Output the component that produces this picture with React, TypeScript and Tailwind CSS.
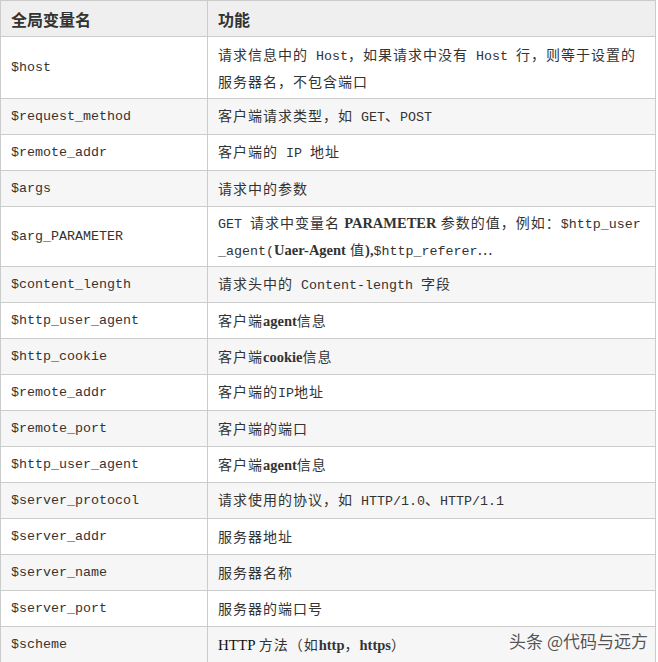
import type { ReactNode } from 'react'

type Row = { name: string; desc: ReactNode; tall?: boolean }

// latin runs in the reference are half-width (8px), cjk runs 15px
function M({ children }: { children: ReactNode }) {
  return <span className="font-['Liberation_Mono',monospace] text-[13.33px] tracking-normal">{children}</span>
}

function B({ children }: { children: ReactNode }) {
  return <span className="font-['Liberation_Serif',serif] font-bold text-[14.5px] tracking-normal">{children}</span>
}

function R({ children }: { children: ReactNode }) {
  return <span className="font-['Liberation_Serif',serif] text-[15px] text-[#111] tracking-normal">{children}</span>
}

const rows: Row[] = [
  {
    name: '$host',
    tall: true,
    desc: (
      <>
        请求信息中的<M> Host</M>，如果请求中没有<M> Host </M>行，则等于设置的
        <br />
        服务器名，不包含端口
      </>
    ),
  },
  { name: '$request_method', desc: <>客户端请求类型，如<M> GET</M>、<M>POST</M></> },
  { name: '$remote_addr', desc: <>客户端的<M> IP </M>地址</> },
  { name: '$args', desc: '请求中的参数' },
  {
    name: '$arg_PARAMETER',
    tall: true,
    desc: (
      <>
        <M>GET </M>请求中变量名 <B>PARAMETER</B> 参数的值，例如：<M>$http_user</M>
        <br />
        <M>_agent(</M><B>Uaer-Agent</B> 值<B>),</B><M>$http_referer</M>…
      </>
    ),
  },
  { name: '$content_length', desc: <>请求头中的<M> Content-length </M>字段</> },
  { name: '$http_user_agent', desc: <>客户端<B>agent</B>信息</> },
  { name: '$http_cookie', desc: <>客户端<B>cookie</B>信息</> },
  { name: '$remote_addr', desc: <>客户端的<M>IP</M>地址</> },
  { name: '$remote_port', desc: '客户端的端口' },
  { name: '$http_user_agent', desc: <>客户端<B>agent</B>信息</> },
  { name: '$server_protocol', desc: <>请求使用的协议，如<M> HTTP/1.0</M>、<M>HTTP/1.1</M></> },
  { name: '$server_addr', desc: '服务器地址' },
  { name: '$server_name', desc: '服务器名称' },
  { name: '$server_port', desc: '服务器的端口号' },
  { name: '$scheme', desc: <><R>HTTP </R>方法（如<B>http</B>，<B>https</B>）</> },
]

export default function App() {
  return (
    <div className="relative w-[658px] h-[662px] overflow-hidden bg-white">
      <table className="border-collapse w-[656px] text-[#333]">
        <thead>
          <tr className="h-[36px] bg-[#efefef]">
            <th className="w-[207px] border border-[#cccccc] px-[10px] text-left text-[16px] font-bold font-['Noto_Sans_CJK_SC',sans-serif]">
              全局变量名
            </th>
            <th className="border border-[#cccccc] px-[10px] text-left text-[16px] font-bold font-['Noto_Sans_CJK_SC',sans-serif]">
              功能
            </th>
          </tr>
        </thead>
        <tbody>
          {rows.map((r, i) => (
            <tr
              key={i}
              className={`${r.tall ? (i === 0 ? 'h-[62px]' : 'h-[60px]') : 'h-[36px]'} ${i % 2 === 1 ? 'bg-[#f6f6f6]' : 'bg-white'}`}
            >
              <td className="border border-[#cccccc] px-[10px] text-[13.33px] text-[#333] font-['Liberation_Mono',monospace]">
                {r.name}
              </td>
              <td className="border border-[#cccccc] px-[10px] leading-[25px] whitespace-nowrap text-[14px] tracking-[1px] font-['Noto_Sans_CJK_SC',sans-serif]">
                {r.desc}
              </td>
            </tr>
          ))}
        </tbody>
      </table>
      <div className="absolute right-[10px] bottom-[9px] text-[17px] text-[#555] font-['Noto_Sans_CJK_SC',sans-serif] [text-shadow:0_0_2px_#fff,0_0_1px_#fff]">
        头条 @代码与远方
      </div>
    </div>
  )
}
